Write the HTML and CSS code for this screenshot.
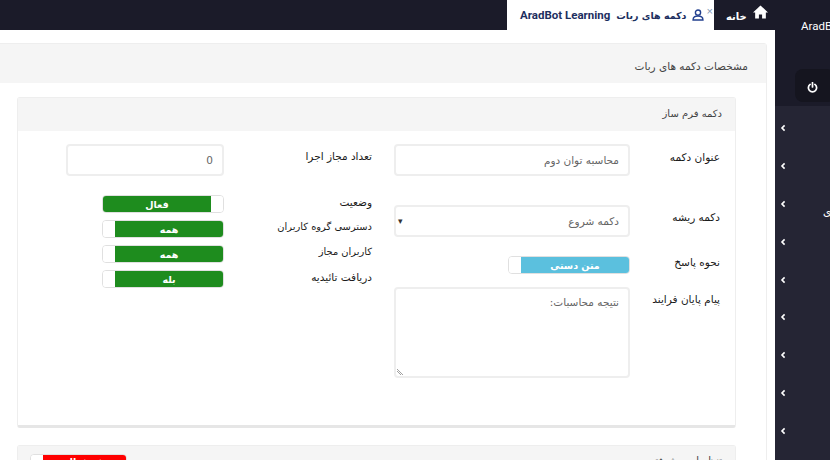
FILE: index.html
```html
<!DOCTYPE html>
<html lang="fa">
<head>
<meta charset="utf-8">
<title>AradBot Learning</title>
<link rel="stylesheet" href="styles.css">
</head>
<body>
<div class="page">
  <main class="main">
    <header class="topbar">
      <div class="topbar-fill"></div>
      <div class="tab">
        <span class="tab-title">AradBot Learning</span>
        <span class="tab-title-fa">دکمه های ربات</span>
        <svg class="tab-icon" viewBox="0 0 12 12" width="12" height="12"><circle cx="6" cy="3.6" r="2.6" fill="none" stroke="#23408f" stroke-width="1.4"/><path d="M1 11c0-3 2-4 5-4s5 1 5 4z" fill="none" stroke="#23408f" stroke-width="1.3"/></svg>
        <span class="tab-close">×</span>
      </div>
      <div class="home">
        <span class="home-label">خانه</span>
        <svg viewBox="0 0 16 14" width="15" height="14" class="home-icon"><path d="M8 0 0 7.4h2.3V14h4v-4.4h3.4V14h4V7.4H16z" fill="#fff"/></svg>
      </div>
    </header>
    <section class="panel">
      <div class="panel-head">مشخصات دکمه های ربات</div>
      <div class="panel-body">
        <div class="card">
          <div class="card-head">دکمه فرم ساز</div>
          <div class="form">
            <div class="col col-right">
              <div class="row row-input">
                <label class="label label-r label-title">عنوان دکمه</label>
                <div class="input input-r">محاسبه توان دوم</div>
              </div>
              <div class="row row-select">
                <label class="label label-r">دکمه ریشه</label>
                <div class="input input-r select"><span>دکمه شروع</span><span class="caret">▾</span></div>
              </div>
              <div class="row row-mode">
                <label class="label label-r">نحوه پاسخ</label>
                <div class="control-r"><div class="toggle toggle-mode"><span class="toggle-on blue">متن دستی</span><span class="knob"></span></div></div>
              </div>
              <div class="row row-area">
                <label class="label label-r">پیام پایان فرایند</label>
                <div class="textarea input-r">نتیجه محاسبات:<svg class="grip" viewBox="0 0 8 8" width="8" height="8"><path d="M1 3l4 4M1 1l6 6" stroke="#888" stroke-width=".8" fill="none"/></svg></div>
              </div>
            </div>
            <div class="col col-left">
              <div class="row row-input">
                <label class="label label-l">تعداد مجاز اجرا</label>
                <div class="input input-l">0</div>
              </div>
              <div class="row row-t1">
                <label class="label label-l">وضعیت</label>
                <div class="toggle"><span class="knob"></span><span class="toggle-on green">فعال</span></div>
              </div>
              <div class="row row-t">
                <label class="label label-l label-narrow">دسترسی گروه کاربران</label>
                <div class="toggle"><span class="toggle-on green">همه</span><span class="knob"></span></div>
              </div>
              <div class="row row-t">
                <label class="label label-l label-narrow">کاربران مجاز</label>
                <div class="toggle"><span class="toggle-on green">همه</span><span class="knob"></span></div>
              </div>
              <div class="row row-t">
                <label class="label label-l">دریافت تائیدیه</label>
                <div class="toggle"><span class="toggle-on green">بله</span><span class="knob"></span></div>
              </div>
            </div>
          </div>
        </div>
        <div class="card card-2">
          <div class="card-head card-head-2">
            <span class="card-2-title">تنظیمات پیشرفته</span>
            <div class="toggle toggle-red"><span class="toggle-on red">غیرفعال</span><span class="knob"></span></div>
          </div>
        </div>
      </div>
    </section>
  </main>
  <aside class="side">
    <div class="side-top">
      <div class="brand">AradBot</div>
      <div class="power">
        <svg viewBox="0 0 12 12" width="11" height="11"><path d="M3.4 2.6a4.5 4.5 0 1 0 5.2 0" fill="none" stroke="#fff" stroke-width="1.9" stroke-linecap="round"/><path d="M6 .8v4.6" stroke="#fff" stroke-width="1.9" stroke-linecap="round"/></svg>
      </div>
    </div>
    <nav class="side-nav">
      <div class="side-item"><svg class="chev" viewBox="0 0 6 8"><path d="M4.6 1.4 2 4l2.6 2.6" /></svg></div>
      <div class="side-item"><svg class="chev" viewBox="0 0 6 8"><path d="M4.6 1.4 2 4l2.6 2.6" /></svg></div>
      <div class="side-item"><svg class="chev" viewBox="0 0 6 8"><path d="M4.6 1.4 2 4l2.6 2.6" /></svg><span class="side-text">ی</span></div>
      <div class="side-item"><svg class="chev" viewBox="0 0 6 8"><path d="M4.6 1.4 2 4l2.6 2.6" /></svg></div>
      <div class="side-item"><svg class="chev" viewBox="0 0 6 8"><path d="M4.6 1.4 2 4l2.6 2.6" /></svg></div>
      <div class="side-item"><svg class="chev" viewBox="0 0 6 8"><path d="M4.6 1.4 2 4l2.6 2.6" /></svg></div>
      <div class="side-item"><svg class="chev" viewBox="0 0 6 8"><path d="M4.6 1.4 2 4l2.6 2.6" /></svg></div>
      <div class="side-item"><svg class="chev" viewBox="0 0 6 8"><path d="M4.6 1.4 2 4l2.6 2.6" /></svg></div>
      <div class="side-item"><svg class="chev" viewBox="0 0 6 8"><path d="M4.6 1.4 2 4l2.6 2.6" /></svg></div>
    </nav>
  </aside>
</div>
</body>
</html>
```
FILE: styles.css
```css
* { box-sizing: border-box; }
html, body { margin: 0; height: 100%; overflow: hidden; background: #fff; }
body { font-family: "DejaVu Sans", sans-serif; font-size: 10px; color: #333; }
.page { display: flex; width: 830px; height: 460px; overflow: hidden; }
.main { width: 775px; flex: none; display: flex; flex-direction: column; }
.side { width: 55px; flex: none; background: #252534; display: flex; flex-direction: column; overflow: hidden; }

.topbar { height: 30px; flex: none; display: flex; background: #1b1b29; }
.topbar-fill { width: 507px; flex: none; }
.tab { width: 207px; flex: none; background: #fff; display: flex; align-items: center; padding: 0 1px 0 13px; color: #1d2f5f; font-weight: 700; gap: 6px; white-space: nowrap; }
.tab-title { font: 700 11.5px Roboto, sans-serif; }
.tab-title-fa { font-size: 9.5px; color: #1d2f5f; }
.tab-icon { flex: none; }
.tab-close { color: #7f97b5; font: 11px/1 "Liberation Sans", sans-serif; margin-left: -4px; margin-top: -7px; }
.home { flex: 1; display: flex; align-items: flex-start; padding: 5px 0 0 12px; gap: 6px; color: #fff; }
.home-label { font-weight: 700; font-size: 10px; margin-top: 6px; }

.panel { margin: 13px 8px 0 -10px; flex: 1; border: 1px solid #eee; border-radius: 3px 3px 0 0; display: flex; flex-direction: column; }
.panel-head { height: 39px; flex: none; background: #f5f5f5; direction: rtl; padding: 5px 18px 0 0; display: flex; align-items: center; font-size: 10.5px; color: #444; }
.panel-body { padding: 14px 30px 0 26px; }
.card { border: 1px solid #eee; border-bottom: 3px solid #e6e6e6; border-radius: 3px; background: #fff; height: 331px; }
.card-head { height: 33px; background: #f5f5f5; direction: rtl; padding: 0 13px 3px; display: flex; align-items: center; font-size: 10px; color: #444; }
.card-2 { margin-top: 17px; height: 60px; border-bottom: 0; }
.card-head-2 { justify-content: space-between; align-items: flex-start; padding: 8px 13px 0 12px; height: 50px; }
.card-2-title { margin-top: 1px; }

.form { direction: rtl; display: flex; padding: 13px 15px 0 0; }
.col { display: flex; flex-direction: column; }
.col-right { width: 326px; }
.col-left { margin-right: 22px; }
.row { display: flex; }
.label { font-size: 10.5px; color: #1a1a1a; white-space: nowrap; }
.label-narrow { font-size: 9.9px; }
.label-r { width: 90px; flex: none; }
.label-l { width: 148px; flex: none; }
.input, .textarea { border: 2px solid #eee; border-radius: 4px; background: #fff; color: #666; font-size: 10.5px; padding: 0 9px; }
.input { height: 32px; display: flex; align-items: center; }
.input-r { width: 236px; }
.input-l { width: 158px; }
.select { justify-content: space-between; padding-left: 2px; }
.caret { font-size: 9px; color: #333; }
.textarea { height: 91px; padding-top: 7px; position: relative; }
.grip { position: absolute; left: 0; bottom: 0; }
.row-input .label { padding-top: 6px; }
.row-input .label-title { padding-top: 7px; }
.row-select { margin-top: 29px; }
.row-select .label { padding-top: 6px; }
.row-mode { margin-top: 19px; }
.row-area { margin-top: 13px; }
.row-area .label { padding-top: 6px; }
.row-t1 { margin-top: 19px; }
.row-t { margin-top: 7px; }
.row-t1 .label, .row-t .label { margin-top: 1px; }

.control-r { width: 236px; }
.toggle { width: 122px; height: 18px; display: flex; border: 1px solid #e0e0e0; border-radius: 4px; overflow: hidden; background: #fff; color: #fff; font-weight: 700; font-size: 9.5px; }
.knob { width: 12px; flex: none; background: #fff; }
.toggle-on { flex: 1; display: flex; align-items: center; justify-content: center; }
.green { background: #1e8c1e; }
.blue { background: #5bc0de; }
.red { background: #f00; padding-bottom: 3px; }
.toggle-red { width: 97px; height: 18px; }

.side-top { flex: none; background: #1b1b29; position: relative; padding: 19px 0 0 26px; height: 106px; }
.brand { color: #fff; font: 11.5px Roboto, sans-serif; white-space: nowrap; }
.power { position: absolute; left: 20px; top: 69px; width: 40px; height: 33px; background: #15151f; border-radius: 8px; display: flex; align-items: center; padding: 4px 0 0 12px; }
.side-nav { display: flex; flex-direction: column; padding-top: 3px; }
.side-item { height: 37.9px; flex: none; display: flex; align-items: center; position: relative; padding-left: 5px; }
.chev { width: 6px; height: 8px; fill: none; stroke: #fff; stroke-width: 1.6; }
.side-text { position: absolute; left: 48px; top: 20px; color: #fff; font-size: 10.5px; }
```
